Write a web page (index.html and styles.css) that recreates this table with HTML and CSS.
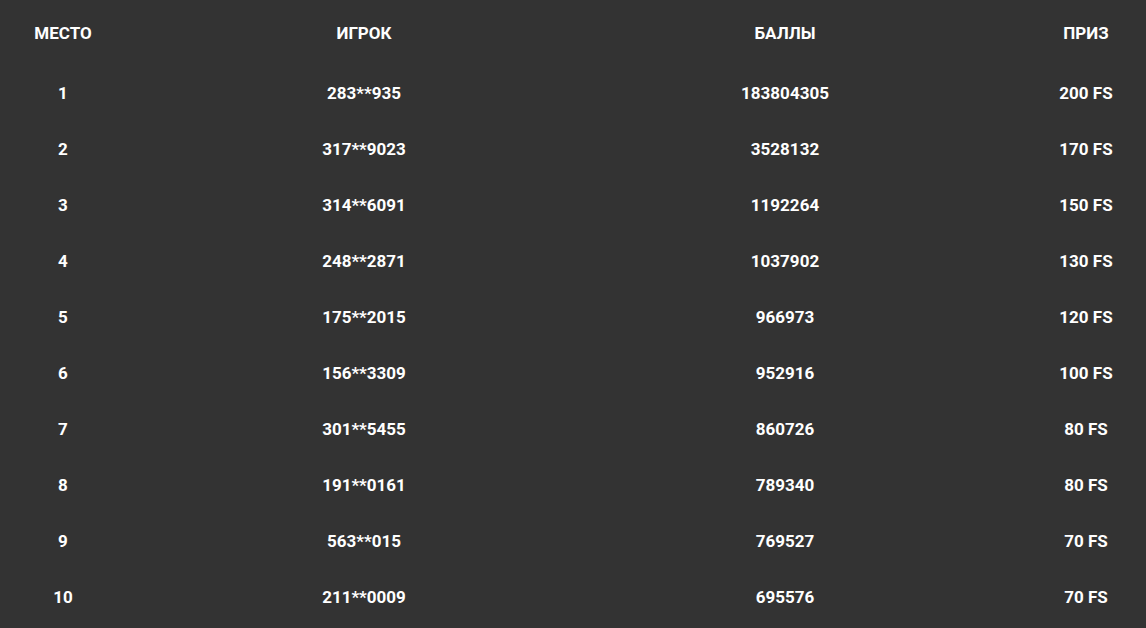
FILE: index.html
```html
<!DOCTYPE html>
<html lang="ru">
<head>
    <meta charset="UTF-8">
    <meta name="viewport" content="width=device-width, initial-scale=1.0">
    <title>Турнир</title>
    <link rel="stylesheet" href="styles.css">
</head>
<body>
    <div class="board">
        <div class="row head">
            <div>МЕСТО</div>
            <div>ИГРОК</div>
            <div>БАЛЛЫ</div>
            <div>ПРИЗ</div>
        </div>
        <div class="row"><div>1</div><div>283**935</div><div>183804305</div><div>200 FS</div></div>
        <div class="row"><div>2</div><div>317**9023</div><div>3528132</div><div>170 FS</div></div>
        <div class="row"><div>3</div><div>314**6091</div><div>1192264</div><div>150 FS</div></div>
        <div class="row"><div>4</div><div>248**2871</div><div>1037902</div><div>130 FS</div></div>
        <div class="row"><div>5</div><div>175**2015</div><div>966973</div><div>120 FS</div></div>
        <div class="row"><div>6</div><div>156**3309</div><div>952916</div><div>100 FS</div></div>
        <div class="row"><div>7</div><div>301**5455</div><div>860726</div><div>80 FS</div></div>
        <div class="row"><div>8</div><div>191**0161</div><div>789340</div><div>80 FS</div></div>
        <div class="row"><div>9</div><div>563**015</div><div>769527</div><div>70 FS</div></div>
        <div class="row"><div>10</div><div>211**0009</div><div>695576</div><div>70 FS</div></div>
    </div>
</body>
</html>
```

FILE: styles.css
```css
html, body {
    margin: 0;
    background-color: #333333;
}
body {
    font-family: Roboto, "Liberation Sans", sans-serif;
    font-weight: 700;
    font-size: 17px;
    color: #ffffff;
}
.board {
    width: 1146px;
}
.row {
    display: grid;
    grid-template-columns: 126px 360px 366px 120px;
    column-gap: 58px;
    align-items: center;
    height: 56px;
    text-align: center;
}
.row.head {
    height: 65px;
}
```
